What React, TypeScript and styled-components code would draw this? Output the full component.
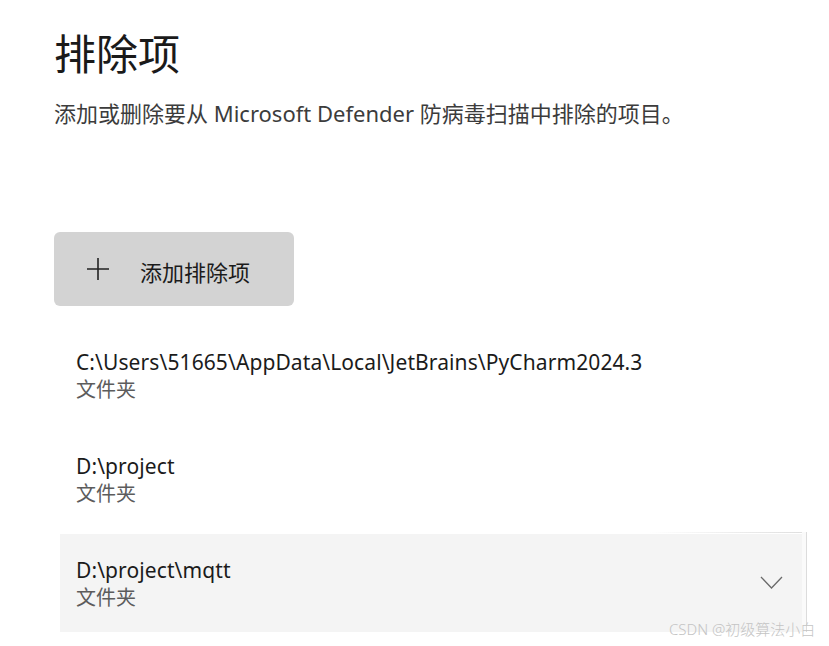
import React from "react";
import styled, { createGlobalStyle } from "styled-components";

const Global = createGlobalStyle`
  html, body { margin: 0; padding: 0; background: #ffffff; }
  body { font-family: "Noto Sans", "Noto Sans CJK SC", sans-serif; }
`;

const Page = styled.div`
  position: relative;
  width: 829px;
  height: 646px;
  box-sizing: border-box;
  padding: 23px 0 0 54px;
  display: flex;
  flex-direction: column;
  overflow: hidden;
`;

const Title = styled.h1`
  margin: 0;
  font-family: "Noto Sans CJK SC", sans-serif;
  font-weight: 400;
  font-size: 42px;
  line-height: 58px;
  color: #1a1a1a;
`;

const Subtitle = styled.p`
  margin: 17px 0 0;
  font-family: "Noto Sans", "Noto Sans CJK SC", sans-serif;
  font-size: 22px;
  line-height: 30px;
  color: #3c3c3c;
`;

const AddButton = styled.button`
  margin-top: 104px;
  width: 240px;
  height: 74px;
  border: none;
  border-radius: 6px;
  background: #d3d3d3;
  display: flex;
  align-items: center;
  padding: 0 0 0 32px;
  gap: 30px;
  font-family: "Noto Sans CJK SC", sans-serif;
  font-size: 22px;
  color: #1b1b1b;
  cursor: pointer;
`;

const ButtonLabel = styled.span`
  margin-top: 4px;
`;

const List = styled.div`
  margin-top: 20px;
  margin-left: 6px;
  display: flex;
  flex-direction: column;
  gap: 6px;
`;

const Row = styled.div<{ $active?: boolean }>`
  position: relative;
  width: 742px;
  height: 98px;
  box-sizing: border-box;
  padding: 0 19px 0 16px;
  display: flex;
  align-items: center;
  justify-content: space-between;
  background: ${(p) => (p.$active ? "#f4f4f4" : "transparent")};
  ${(p) =>
    p.$active &&
    `
    &::before {
      content: "";
      position: absolute;
      top: -2px;
      right: -5px;
      width: 158px;
      height: 1px;
      background: linear-gradient(to right, rgba(224,224,224,0), #dedede);
    }
    &::after {
      content: "";
      position: absolute;
      top: -2px;
      right: -5px;
      bottom: 0;
      width: 4px;
      background: #fafafa;
      border-right: 1px solid #dcdcdc;
    }
  `}
`;

const RowText = styled.div`
  display: flex;
  flex-direction: column;
`;

const Path = styled.div`
  font-family: "Noto Sans", "Noto Sans CJK SC", sans-serif;
  font-size: 21px;
  line-height: 28px;
  color: #1b1b1b;
  letter-spacing: 0.1px;
`;

const Kind = styled.div`
  font-family: "Noto Sans CJK SC", sans-serif;
  font-size: 20px;
  line-height: 26px;
  color: #5c5c5c;
`;

const Watermark = styled.div`
  position: absolute;
  left: 669px;
  top: 619px;
  font-family: "Noto Sans", "Noto Sans CJK SC", sans-serif;
  font-size: 15px;
  line-height: 20px;
  font-weight: 300;
  color: #c4c4c4;
  white-space: nowrap;
`;

const PlusIcon = () => (
  <svg width="24" height="24" viewBox="0 0 24 24" aria-hidden="true">
    <path d="M12 1v22M1 12h22" stroke="#222" strokeWidth="1.6" fill="none" />
  </svg>
);

const Chevron = () => (
  <svg width="23" height="14" viewBox="0 0 23 14" aria-hidden="true">
    <path d="M1 1l10.5 11L22 1" stroke="#6a6a6a" strokeWidth="1.3" fill="none" />
  </svg>
);

const items = [
  { path: "C:\\Users\\51665\\AppData\\Local\\JetBrains\\PyCharm2024.3", active: false },
  { path: "D:\\project", active: false },
  { path: "D:\\project\\mqtt", active: true },
];

export default function App() {
  return (
    <>
      <Global />
      <Page>
        <Title>排除项</Title>
        <Subtitle>添加或删除要从 Microsoft Defender 防病毒扫描中排除的项目。</Subtitle>
        <AddButton>
          <PlusIcon />
          <ButtonLabel>添加排除项</ButtonLabel>
        </AddButton>
        <List>
          {items.map((it) => (
            <Row key={it.path} $active={it.active}>
              <RowText>
                <Path>{it.path}</Path>
                <Kind>文件夹</Kind>
              </RowText>
              {it.active && <Chevron />}
            </Row>
          ))}
        </List>
        <Watermark>CSDN @初级算法小白</Watermark>
      </Page>
    </>
  );
}
